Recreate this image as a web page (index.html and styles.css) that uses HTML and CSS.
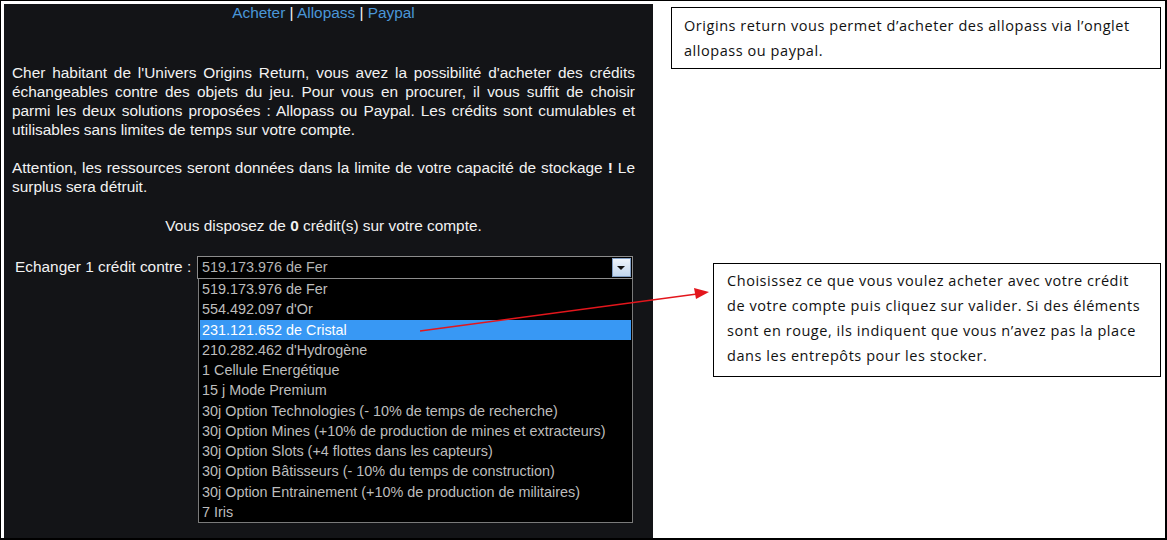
FILE: index.html
```html
<!DOCTYPE html>
<html lang="fr">

<head>
    <meta charset="UTF-8">
    <meta name="viewport" content="width=device-width, initial-scale=1.0">
    <title>Origins Return - Acheter</title>
    <link rel="stylesheet" href="styles.css">
</head>

<body>

    <div class="frame">

        <!-- capture du jeu -->
        <div class="game">
            <div class="nav">
                <a href="#">Acheter</a> | <a href="#">Allopass</a> | <a href="#">Paypal</a>
            </div>

            <p class="intro">
                Cher habitant de l'Univers Origins Return, vous avez la possibilité d'acheter des crédits
                échangeables contre des objets du jeu. Pour vous en procurer, il vous suffit de choisir
                parmi les deux solutions proposées : Allopass ou Paypal. Les crédits sont cumulables et
                utilisables sans limites de temps sur votre compte.
            </p>

            <p class="warning">
                Attention, les ressources seront données dans la limite de votre capacité de stockage <b>!</b> Le
                surplus sera détruit.
            </p>

            <p class="solde">Vous disposez de <b>0</b> crédit(s) sur votre compte.</p>

            <div class="echange">
                <span class="label">Echanger 1 crédit contre :</span>
                <div class="combo">
                    <div class="select">
                        <span>519.173.976 de Fer</span>
                        <span class="arrow"></span>
                    </div>
                    <ul class="options">
                        <li>519.173.976 de Fer</li>
                        <li>554.492.097 d'Or</li>
                        <li class="selected">231.121.652 de Cristal</li>
                        <li>210.282.462 d'Hydrogène</li>
                        <li>1 Cellule Energétique</li>
                        <li>15 j Mode Premium</li>
                        <li>30j Option Technologies (- 10% de temps de recherche)</li>
                        <li>30j Option Mines (+10% de production de mines et extracteurs)</li>
                        <li>30j Option Slots (+4 flottes dans les capteurs)</li>
                        <li>30j Option Bâtisseurs (- 10% du temps de construction)</li>
                        <li>30j Option Entrainement (+10% de production de militaires)</li>
                        <li>7 Iris</li>
                    </ul>
                </div>
            </div>
        </div>

        <!-- notes explicatives -->
        <div class="notes">
            <div class="note note-top">
                Origins return vous permet d’acheter des allopass via l’onglet allopass ou paypal.
            </div>
            <div class="note note-choix">
                Choisissez ce que vous voulez acheter avec votre crédit de votre compte puis cliquez sur valider.
                Si des éléments sont en rouge, ils indiquent que vous n’avez pas la place dans les entrepôts pour
                les stocker.
            </div>
        </div>

        <svg class="pointer" width="1167" height="540" viewBox="0 0 1167 540">
            <line x1="420" y1="331" x2="697" y2="294" stroke="#e3161c" stroke-width="1.3" />
            <polygon points="709,292 694,288 696,299" fill="#e3161c" />
        </svg>
    </div>

</body>

</html>
```

FILE: styles.css
```css
body {
    margin: 0;
    padding: 0;
    background-color: #fff;
}

.frame {
    position: relative;
    display: flex;
    width: 1167px;
    height: 540px;
    box-sizing: border-box;
    border: 1px solid #000;
    border-right-width: 2px;
    border-bottom-width: 2px;
    overflow: hidden;
}

/* panneau du jeu */
.game {
    width: 649px;
    margin: 3px 0 0 3px;
    padding: 0 18px 0 8px;
    box-sizing: border-box;
    background-color: #131417;
    color: #f2f2f2;
    font-family: "Liberation Sans", Arial, sans-serif;
    font-size: 15.4px;
    line-height: 19px;
}

.nav {
    text-align: center;
    line-height: 17px;
}

.nav a {
    color: #4a96d8;
    text-decoration: none;
}

.intro {
    margin: 42px 0 0;
    text-align: justify;
}

.warning {
    margin: 19px 0 0;
    text-align: justify;
}

.solde {
    margin: 20px 0 0;
    text-align: center;
}

.echange {
    display: flex;
    margin-top: 21px;
    padding-left: 3px;
}

.label {
    width: 182px;
    line-height: 22px;
}

.combo {
    width: 436px;
    font-size: 14.4px;
}

.select {
    display: flex;
    justify-content: space-between;
    align-items: center;
    height: 23px;
    box-sizing: border-box;
    border: 1px solid #8c8c8c;
    background-color: #000;
    color: #b4b4b4;
    padding-left: 4px;
}

.arrow {
    position: relative;
    width: 19px;
    height: 19px;
    margin-right: 1px;
    box-sizing: border-box;
    border: 1px solid #7f9dc4;
    background: linear-gradient(#eef4fb, #c3d7ee);
}

.arrow::after {
    content: "";
    position: absolute;
    left: 4px;
    top: 7px;
    border-left: 4px solid transparent;
    border-right: 4px solid transparent;
    border-top: 4px solid #111;
}

.options {
    list-style: none;
    margin: 0 0 0 1px;
    padding: 0;
    border: 1px solid #7a7a7a;
    border-top: none;
    background-color: #000;
    color: #bdbdbd;
}

.options li {
    height: 20.25px;
    line-height: 20px;
    padding-left: 3px;
}

.options li.selected {
    background-color: #3898f4;
    color: #fff;
    margin: 0 1px;
    padding-left: 2px;
}

/* notes */
.notes {
    flex: 1;
    font-family: "Open Sans", sans-serif;
    font-size: 14.5px;
    letter-spacing: 0.55px;
    line-height: 25px;
    color: #111;
}

.note {
    box-sizing: border-box;
    border: 1px solid #000;
}

.note-top {
    width: 490px;
    margin: 6px 0 0 18px;
    padding: 5px 20px 5px 12px;
}

.note-choix {
    width: 448px;
    margin: 194px 0 0 60px;
    padding: 4px 18px 8px 13px;
}

.pointer {
    position: absolute;
    left: -1px;
    top: -1px;
    pointer-events: none;
}
```
